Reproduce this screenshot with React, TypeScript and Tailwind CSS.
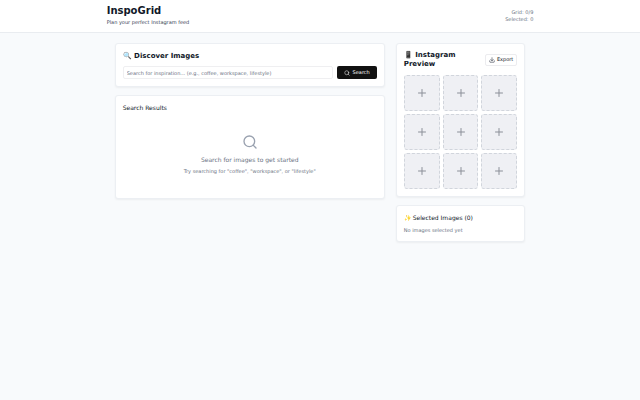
import { useState, type FormEvent } from 'react'
import { Download, Plus, Search } from 'lucide-react'

// ── Types ─────────────────────────────────────────────────────────────
interface InspoImage {
  id: string
  title: string
}

const GRID_SIZE = 9

const cardClass = 'rounded-[3px] border border-[#eceff3] bg-white p-[7px] shadow-xs'

// ── Header ────────────────────────────────────────────────────────────
function Header({ gridCount, selectedCount }: { gridCount: number; selectedCount: number }) {
  return (
    <header className="border-b border-[#e9ecf0] bg-white">
      <div className="mx-auto flex w-2/3 items-center justify-between pt-1 pb-[5px]">
        <div>
          <h1 className="text-[10px] leading-[14px] font-bold text-gray-900">InspoGrid</h1>
          <p className="text-[5px] leading-[9px] text-gray-700">Plan your perfect Instagram feed</p>
        </div>
        <div className="text-right text-[5px] leading-[7px] text-gray-500">
          <p>Grid: {gridCount}/{GRID_SIZE}</p>
          <p>Selected: {selectedCount}</p>
        </div>
      </div>
    </header>
  )
}

// ── Search ────────────────────────────────────────────────────────────
function SearchCard() {
  const [query, setQuery] = useState('')

  const handleSubmit = (e: FormEvent) => {
    e.preventDefault()
  }

  return (
    <section className={cardClass}>
      <h2 className="text-[7px] leading-[10px] font-bold text-gray-900">🔍 Discover Images</h2>
      <form onSubmit={handleSubmit} className="mt-[5px] flex gap-1">
        <input
          type="text"
          aria-label="Search for inspiration"
          value={query}
          onChange={(e) => setQuery(e.target.value)}
          placeholder="Search for inspiration... (e.g., coffee, workspace, lifestyle)"
          className="h-[13px] min-w-0 flex-1 rounded-[2px] border border-[#efeff1] px-[3px] text-[5px] placeholder:text-gray-500"
        />
        <button
          type="submit"
          className="flex h-[13px] items-center gap-[3px] rounded-[2px] bg-[#111111] px-[7px] text-[5px] text-white"
        >
          <Search className="size-[6px]" />
          Search
        </button>
      </form>
    </section>
  )
}

function ResultsCard() {
  return (
    <section className={cardClass}>
      <h2 className="text-[6px] leading-[9px] text-gray-900">Search Results</h2>
      <div className="flex flex-col items-center pt-[22px] pb-4 text-center">
        <Search className="size-4 text-gray-400" strokeWidth={2} />
        <p className="mt-[5px] text-[6px] leading-[9px] text-gray-500">Search for images to get started</p>
        <p className="mt-[4px] text-[5px] leading-[7px] text-gray-500">
          Try searching for "coffee", "workspace", or "lifestyle"
        </p>
      </div>
    </section>
  )
}

// ── Instagram preview ─────────────────────────────────────────────────
function PreviewCard({ images }: { images: (InspoImage | null)[] }) {
  return (
    <section className={cardClass}>
      <div className="flex items-center justify-between">
        <h2 className="w-min text-[7px] leading-[9px] font-bold text-gray-900">
          <span className="whitespace-nowrap">
            <span className="opacity-80 grayscale">📱</span> Instagram
          </span>{' '}
          Preview
        </h2>
        <button className="flex h-3 items-center gap-[2px] rounded-[2px] border border-[#ececef] bg-white px-[3px] text-[5px] text-gray-900">
          <Download className="size-[6px]" />
          Export
        </button>
      </div>
      <div className="mt-[6px] grid grid-cols-3 gap-[3px]">
        {images.map((image, i) => (
          <div
            key={i}
            className="flex aspect-square items-center justify-center rounded-[3px] border border-dashed border-gray-300 bg-[#eff0f4] text-[5px]"
          >
            {image ? image.title : <Plus className="size-3 text-[#8b8f98]" />}
          </div>
        ))}
      </div>
    </section>
  )
}

function SelectedCard({ images }: { images: InspoImage[] }) {
  return (
    <section className={cardClass}>
      <h2 className="text-[6px] leading-[9px] text-gray-900">✨ Selected Images ({images.length})</h2>
      {images.length === 0 ? (
        <p className="mt-[5px] text-[5px] leading-[7px] text-gray-500">No images selected yet</p>
      ) : (
        <ul className="mt-[5px] text-[5px] leading-[7px]">
          {images.map((image) => (
            <li key={image.id}>{image.title}</li>
          ))}
        </ul>
      )}
    </section>
  )
}

// ── Page ──────────────────────────────────────────────────────────────
function App() {
  const [grid] = useState<(InspoImage | null)[]>(() => Array(GRID_SIZE).fill(null))
  const [selected] = useState<InspoImage[]>([])

  return (
    <div className="min-h-screen bg-[#f8fafc] font-['DejaVu_Sans',sans-serif]">
      <Header gridCount={grid.filter(Boolean).length} selectedCount={selected.length} />
      <main className="mx-auto grid w-2/3 grid-cols-3 items-start gap-[11px] px-2 py-[10px]">
        <div className="col-span-2 flex flex-col gap-2">
          <SearchCard />
          <ResultsCard />
        </div>
        <div className="flex flex-col gap-2">
          <PreviewCard images={grid} />
          <SelectedCard images={selected} />
        </div>
      </main>
    </div>
  )
}

export default App
